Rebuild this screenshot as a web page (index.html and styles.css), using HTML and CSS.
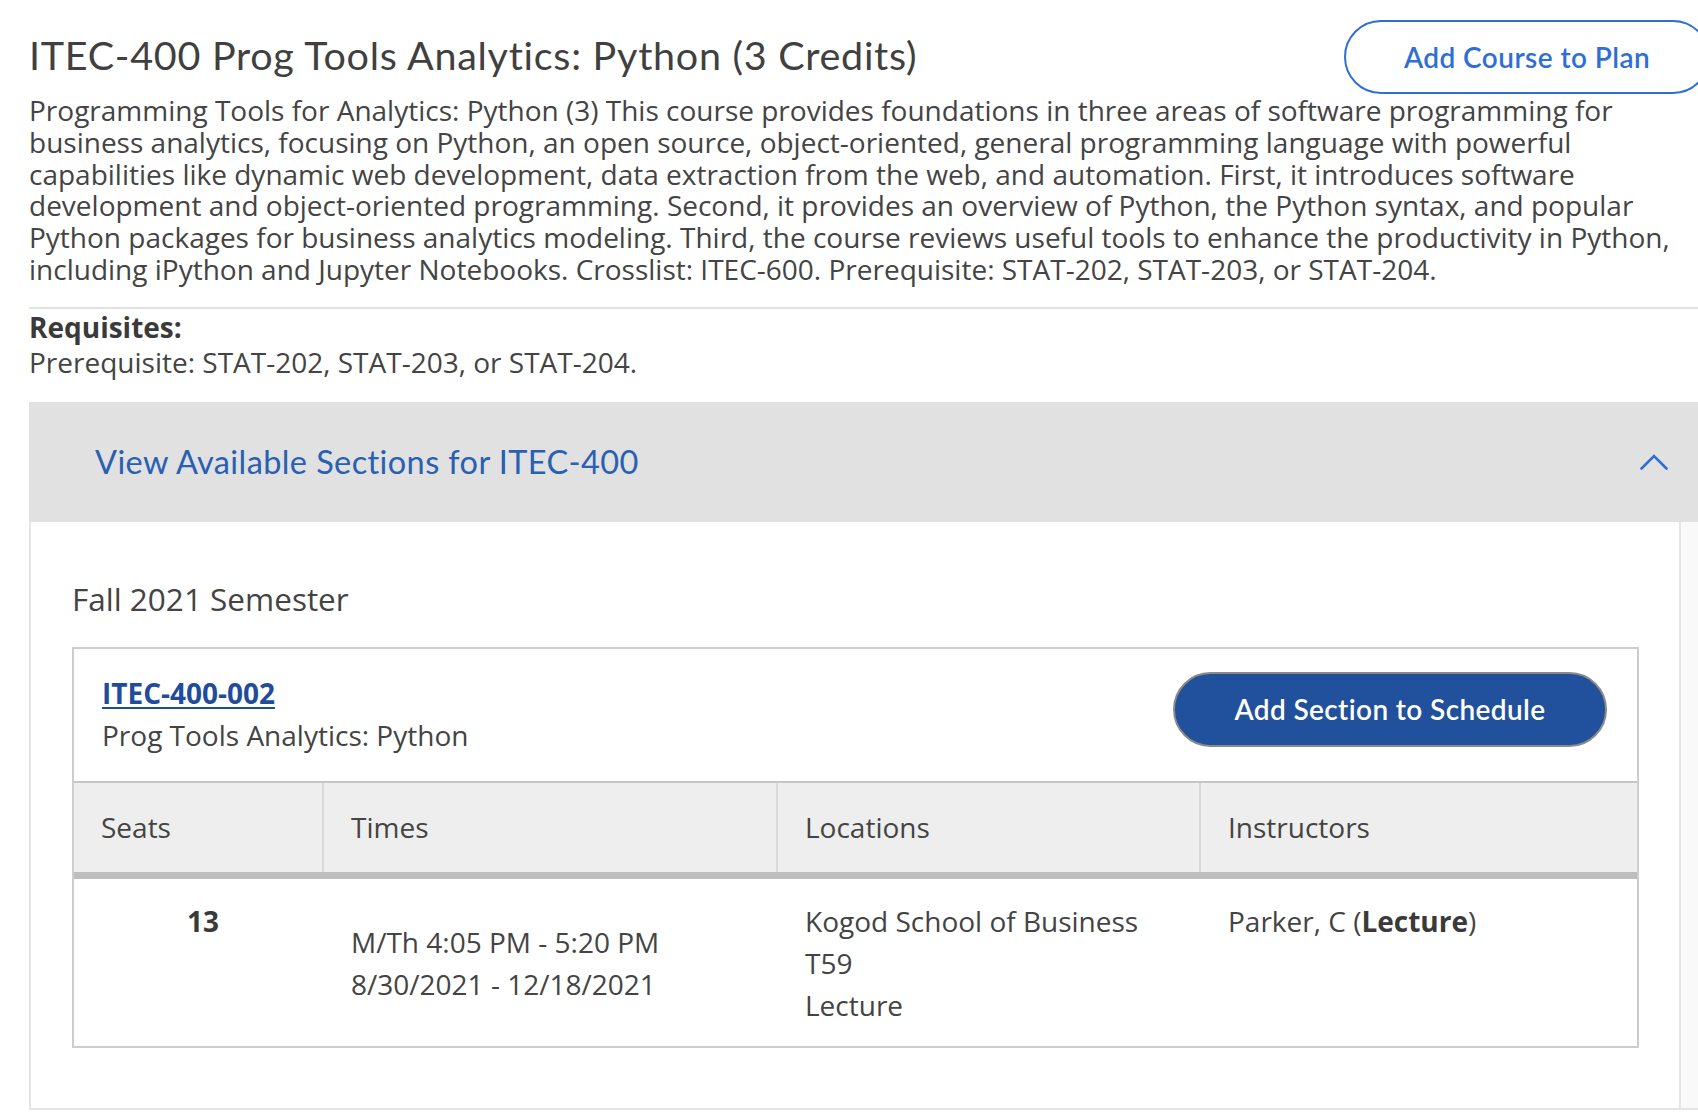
FILE: index.html
```html
<!DOCTYPE html>
<html lang="en">
<head>
<meta charset="utf-8">
<title>ITEC-400 Prog Tools Analytics: Python</title>
<link rel="stylesheet" href="styles.css">
</head>
<body>
<div class="page">
  <header class="course-head">
    <h1 class="course-title">ITEC-400 Prog Tools Analytics: Python (3 Credits)</h1>
    <button class="btn-plan" type="button">Add Course to Plan</button>
  </header>
  <p class="course-desc">Programming Tools for Analytics: Python (3) This course provides foundations in three areas of software programming for business analytics, focusing on Python, an open source, object-oriented, general programming language with powerful capabilities like dynamic web development, data extraction from the web, and automation. First, it introduces software development and object-oriented programming. Second, it provides an overview of Python, the Python syntax, and popular Python packages for business analytics modeling. Third, the course reviews useful tools to enhance the productivity in Python, including iPython and Jupyter Notebooks. Crosslist: ITEC-600. Prerequisite: STAT-202, STAT-203, or STAT-204.</p>
  <hr class="divider">
  <div class="requisites">
    <div class="req-label">Requisites:</div>
    <div class="req-text">Prerequisite: STAT-202, STAT-203, or STAT-204.</div>
  </div>
  <section class="sections">
    <div class="sections-head">
      <span class="sections-title">View Available Sections for ITEC-400</span>
      <svg class="chevron" width="28" height="16" viewBox="0 0 28 16" aria-hidden="true">
        <polyline points="1.5,14.5 14,2 26.5,14.5" fill="none" stroke="#2f6fd5" stroke-width="2.6" stroke-linecap="round" stroke-linejoin="miter"/>
      </svg>
    </div>
    <div class="sections-body">
      <div class="sections-inner">
        <h2 class="semester">Fall 2021 Semester</h2>
        <div class="card">
          <div class="card-head">
            <div class="card-info">
              <a class="section-link" href="#">ITEC-400-002</a>
              <div class="section-name">Prog Tools Analytics: Python</div>
            </div>
            <button class="btn-add" type="button">Add Section to Schedule</button>
          </div>
          <div class="sched-head">
            <div class="th">Seats</div>
            <div class="th">Times</div>
            <div class="th">Locations</div>
            <div class="th">Instructors</div>
          </div>
          <div class="sched-row">
            <div class="td seats">13</div>
            <div class="td times">M/Th 4:05 PM - 5:20 PM<br>8/30/2021 - 12/18/2021</div>
            <div class="td locs">Kogod School of Business<br>T59<br>Lecture</div>
            <div class="td instr">Parker, C (<b>Lecture</b>)</div>
          </div>
        </div>
      </div>
      <div class="gutter"></div>
    </div>
  </section>
</div>
</body>
</html>
```
FILE: styles.css
```css
html, body {
  margin: 0;
  padding: 0;
}

body {
  width: 1698px;
  height: 1120px;
  overflow: hidden;
  background: #ffffff;
  font-family: "Open Sans", "Noto Sans", sans-serif;
  font-size: 28px;
  color: #444444;
}

.page {
  width: 1681px;
  margin-left: 29px;
  padding-top: 20px;
}

/* ---------- course header ---------- */
.course-head {
  display: flex;
  justify-content: space-between;
  align-items: center;
  height: 74px;
}

.course-title {
  margin: 0;
  font-family: Lato, "Open Sans", sans-serif;
  font-weight: 400;
  font-size: 39.5px;
  letter-spacing: 0.72px;
  line-height: 1.2;
  color: #404040;
  position: relative;
  top: -2px;
}

.btn-plan {
  width: 366px;
  height: 74px;
  border: 2px solid #2f6fd5;
  border-radius: 37px;
  background: #ffffff;
  color: #2f6fd5;
  font-family: Lato, "Open Sans", sans-serif;
  font-weight: 600;
  font-size: 28px;
  letter-spacing: 0.42px;
  padding: 0;
  cursor: pointer;
}

.course-desc {
  margin: 1px 0 0;
  font-size: 28px;
  line-height: 31.8px;
  color: #444444;
}

.divider {
  border: 0;
  height: 2px;
  background: #e2e2e2;
  margin: 21px 0 0;
}

/* ---------- requisites ---------- */
.requisites {
  margin-top: 1px;
  line-height: 35px;
}

.req-label {
  font-weight: 700;
  color: #3a3a3a;
}

/* ---------- sections panel ---------- */
.sections {
  margin-top: 22px;
}

.sections-head {
  height: 120px;
  background: #e1e1e1;
  display: flex;
  align-items: center;
  justify-content: space-between;
  padding: 0 42px 0 66px;
}

.sections-title {
  font-family: Lato, "Open Sans", sans-serif;
  font-size: 32.5px;
  letter-spacing: 0.4px;
  color: #2860b3;
}

.chevron {
  display: block;
}

.sections-body {
  display: flex;
  border-left: 2px solid #e5e5e5;
  border-bottom: 2px solid #e5e5e5;
}

.sections-inner {
  width: 1567px;
  padding: 58px 40px 60px 41px;
  border-right: 2px solid #e5e5e5;
}

.gutter {
  flex: 1;
  background: #f9f9f9;
}

.semester {
  margin: 0 0 29px;
  font-weight: 400;
  font-size: 31.5px;
  line-height: 37.8px;
  color: #444444;
}

/* ---------- section card ---------- */
.card {
  border: 2px solid #cdcdcd;
}

.card-head {
  display: flex;
  justify-content: space-between;
  align-items: flex-start;
  padding: 23px 30px 25px 28px;
}

.section-link {
  display: block;
  font-weight: 700;
  line-height: 42px;
  color: #1f4d9b;
  text-decoration: underline;
  text-decoration-thickness: 2px;
  text-underline-offset: 3px;
}

.section-name {
  line-height: 42px;
  color: #444444;
}

.btn-add {
  width: 434px;
  height: 75px;
  border: 2px solid #8a8a8a;
  border-radius: 38px;
  background: #21509c;
  color: #ffffff;
  font-family: Lato, "Open Sans", sans-serif;
  font-weight: 600;
  font-size: 28px;
  letter-spacing: 0.38px;
  padding: 0;
  cursor: pointer;
}

.sched-head,
.sched-row {
  display: grid;
  grid-template-columns: 248px 454px 423px 438px;
}

.sched-head {
  height: 89px;
  background: #eeeeee;
  border-top: 2px solid #c6c6c6;
  border-bottom: 7px solid #bdbdbd;
}

.th {
  display: flex;
  align-items: center;
  padding-left: 27px;
  line-height: 42px;
  color: #444444;
}

.th + .th {
  border-left: 2px solid #d9d9d9;
}

.sched-row {
  padding: 21px 0 20px;
  line-height: 42px;
}

.td {
  padding-left: 29px;
}

.td.seats {
  padding-left: 10px;
  text-align: center;
  font-weight: 700;
  color: #3a3a3a;
}

.td.times {
  align-self: center;
}

.td b {
  font-weight: 700;
  color: #3a3a3a;
}
```
